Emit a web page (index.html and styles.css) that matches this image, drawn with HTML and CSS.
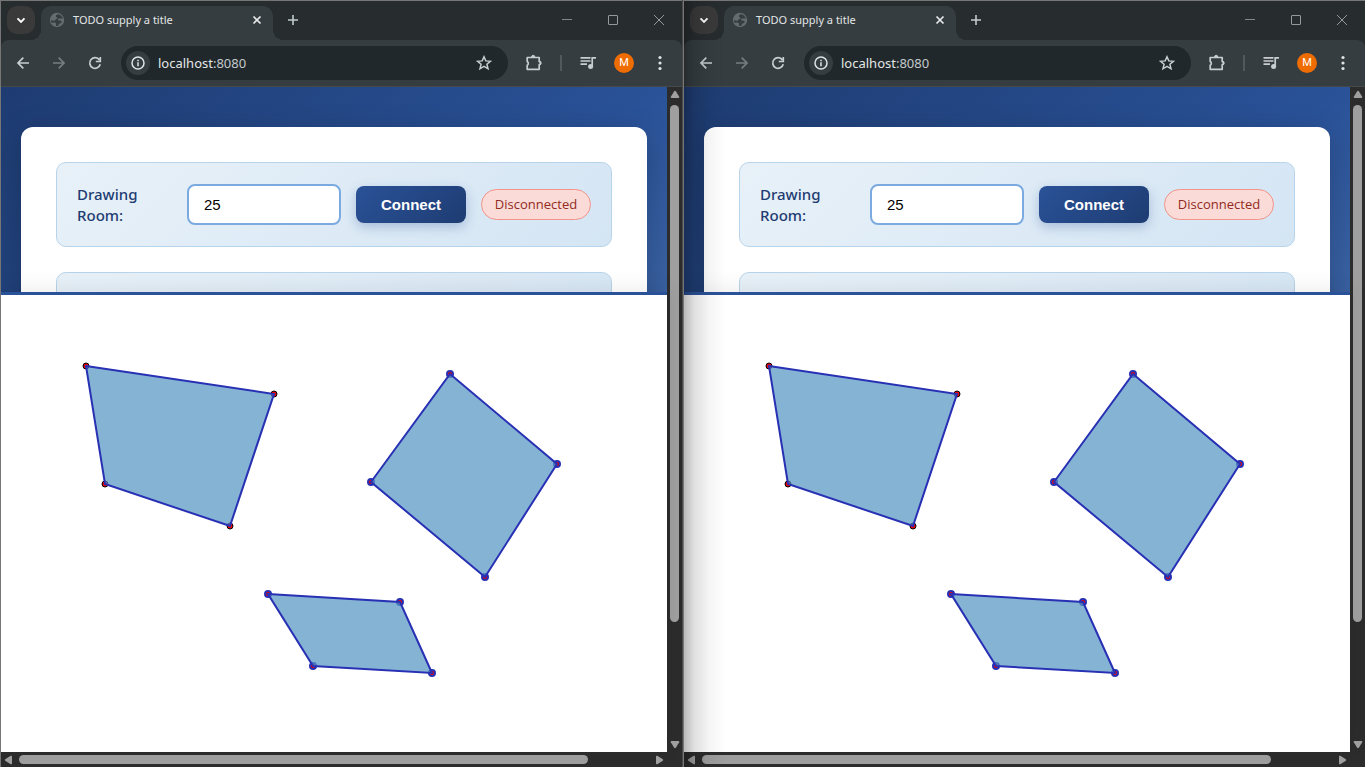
FILE: index.html
```html
<!DOCTYPE html>
<html lang="en">
<head>
<meta charset="utf-8">
<title>TODO supply a title</title>
<link rel="stylesheet" href="styles.css">
</head>
<body>
<svg class="defs" aria-hidden="true">
  <symbol id="i-chevron" viewBox="0 0 16 16"><path d="M4.500 6.300 8 9.800l3.500-3.500" fill="none" stroke="#fff" stroke-width="1.900"/></symbol>
  <symbol id="i-globe" viewBox="0 0 16 16"><circle cx="8" cy="8" r="7.200" fill="#666b6e"/><path d="M9.500 2.300C7.500 2.500 6.700 3.400 7 4.400s1.600.8 1.500 1.800c-.1.900-1.500.7-2.200 1.500-.5.600-.2 1.100-1.200 1L1.900 8.200c0 1 .2 1.900.6 2.600l2.600-.2c1.400 0 1.900.6 1.800 1.500l.3 1.900c1.600.1 2.400-.3 2.500-1.300.1-1 .8-1.200 1.700-1.400 1.100-.3 1.500-1.200 1.100-2-.4-.8-1.400-1-2.400-.8-1 .1-1.500-.5-1-1.200.5-.8 1.300-.8 2.300-.8h2.500c-.3-1-1-2.100-1.800-2.800-.9-.7-1.600-1.200-2.600-1.400z" fill="#353d40"/></symbol>
  <symbol id="i-x" viewBox="0 0 16 16"><path d="m4.500 4.500 7 7m0-7-7 7" stroke="#e8eaea" stroke-width="1.700"/></symbol>
  <symbol id="i-plus" viewBox="0 0 16 16"><path d="M8 3v10M3 8h10" stroke="#c4cbcd" stroke-width="1.600"/></symbol>
  <symbol id="i-min" viewBox="0 0 16 16"><path d="M3 7.500h10" stroke="#82878a"/></symbol>
  <symbol id="i-max" viewBox="0 0 16 16"><rect x="3.500" y="3.500" width="9" height="9" rx=".5" fill="none" stroke="#94999b"/></symbol>
  <symbol id="i-close" viewBox="0 0 16 16"><path d="m3 3 10 10m0-10L3 13" stroke="#94999b"/></symbol>
  <symbol id="i-back" viewBox="0 0 16 16"><path d="M14 8H3m5.300-5.300L3 8l5.300 5.300" fill="none" stroke="currentColor" stroke-width="1.700"/></symbol>
  <symbol id="i-fwd" viewBox="0 0 16 16"><path d="M2 8h11M7.700 2.700 13 8l-5.300 5.300" fill="none" stroke="currentColor" stroke-width="1.700"/></symbol>
  <symbol id="i-reload" viewBox="0 0 16 16"><path d="M12.400 5A5.300 5.300 0 1 0 13.200 9.200M13.300 2v4.500H8.800" fill="none" stroke="#c7cdd0" stroke-width="1.700"/></symbol>
  <symbol id="i-info" viewBox="0 0 16 16"><circle cx="8" cy="8" r="6" fill="none" stroke="#dfe3e4" stroke-width="1.500"/><path d="M8 7.300v3.900M8 4.700v1.500" stroke="#dfe3e4" stroke-width="1.500"/></symbol>
  <symbol id="i-star" viewBox="0 0 16 16"><path d="m8 1.800 1.800 4.100 4.600.4-3.500 3 1.100 4.500L8 11.400l-4 2.400 1.100-4.500-3.500-3 4.600-.4z" fill="none" stroke="#c7cdd0" stroke-width="1.500"/></symbol>
  <symbol id="i-ext" viewBox="0 0 18 18"><path d="M2.200 3.500h12v4.100a1.500 1.500 0 0 1 0 3v4.700h-12v-4a2.200 2.200 0 0 0 0-3.800z" fill="none" stroke="#c7cdd0" stroke-width="1.700" stroke-linejoin="round"/><path d="M6.500 3.300a1.700 2 0 0 1 3.400 0M14.800 7.400a2 2 0 0 1 0 3.600" fill="#c7cdd0" stroke="#c7cdd0"/></symbol>
  <symbol id="i-music" viewBox="0 0 18 18"><path d="M1.500 3.800h10M1.500 7h10M1.500 10.200h6.500M13.200 13V3.800H17" fill="none" stroke="#c7cdd0" stroke-width="1.700"/><circle cx="11.600" cy="12.500" r="2.500" fill="#c7cdd0"/></symbol>
  <symbol id="i-dots" viewBox="0 0 16 16"><g fill="#dfe3e4"><circle cx="8" cy="2.500" r="1.600"/><circle cx="8" cy="8" r="1.600"/><circle cx="8" cy="13.500" r="1.600"/></g></symbol>
  <symbol id="i-arrow" viewBox="0 0 16 16"><path d="M7 4.500q1-1.400 2 0l3.200 5.200q.5 1.300-1 1.300H4.800q-1.500 0-1-1.300z" fill="#9f9f9f"/></symbol>
  <symbol id="drawing" overflow="visible">
    <g fill="#f00000" stroke="#000">
      <circle cx="85" cy="71" r="3"/><circle cx="273" cy="99" r="3"/><circle cx="229" cy="231" r="3"/><circle cx="104" cy="189" r="3"/>
    </g>
    <g fill="#f00000" stroke="#2830b4" stroke-width="2">
      <circle cx="449" cy="79" r="3"/><circle cx="556" cy="169" r="3"/><circle cx="484" cy="282" r="3"/><circle cx="370" cy="187" r="3"/>
      <circle cx="267" cy="299" r="3"/><circle cx="399" cy="307" r="3"/><circle cx="431" cy="378" r="3"/><circle cx="312" cy="371" r="3"/>
    </g>
    <g fill="rgba(81,147,194,.7)" stroke="#2830b4" stroke-width="2">
      <path d="M85 71 273 99 229 231 104 189z"/>
      <path d="M449 79 556 169 484 282 370 187z"/>
      <path d="M267 299 399 307 431 378 312 371z"/>
    </g>
  </symbol>
</svg>
<div class="desktop">
  <section class="window">
    <header class="tabstrip">
      <button class="tab-search" aria-label="Search tabs"><svg class="icon"><use href="#i-chevron"/></svg></button>
      <div class="tab">
        <svg class="icon"><use href="#i-globe"/></svg>
        <span class="tab-title">TODO supply a title</span>
        <button class="icon-btn" aria-label="Close tab"><svg class="icon"><use href="#i-x"/></svg></button>
      </div>
      <button class="icon-btn new-tab" aria-label="New tab"><svg class="icon"><use href="#i-plus"/></svg></button>
      <div class="controls">
        <button class="icon-btn" aria-label="Minimize"><svg class="icon"><use href="#i-min"/></svg></button>
        <button class="icon-btn" aria-label="Maximize"><svg class="icon"><use href="#i-max"/></svg></button>
        <button class="icon-btn" aria-label="Close"><svg class="icon"><use href="#i-close"/></svg></button>
      </div>
    </header>
    <nav class="toolbar">
      <div class="nav-buttons">
        <button class="icon-btn" aria-label="Back"><svg class="icon"><use href="#i-back"/></svg></button>
        <button class="icon-btn dim" aria-label="Forward"><svg class="icon"><use href="#i-fwd"/></svg></button>
        <button class="icon-btn" aria-label="Reload"><svg class="icon"><use href="#i-reload"/></svg></button>
      </div>
      <div class="omnibox">
        <button class="site-info" aria-label="Site information"><svg class="icon"><use href="#i-info"/></svg></button>
        <div class="url">localhost<span class="port">:8080</span></div>
        <button class="icon-btn" aria-label="Bookmark"><svg class="icon"><use href="#i-star"/></svg></button>
      </div>
      <div class="actions">
        <button class="icon-btn" aria-label="Extensions"><svg class="icon-lg"><use href="#i-ext"/></svg></button>
        <span class="divider"></span>
        <button class="icon-btn" aria-label="Media"><svg class="icon-lg"><use href="#i-music"/></svg></button>
        <button class="avatar" aria-label="Profile">M</button>
      </div>
      <button class="icon-btn menu" aria-label="Menu"><svg class="icon"><use href="#i-dots"/></svg></button>
    </nav>
    <div class="viewport">
      <main class="page">
        <div class="backdrop">
          <div class="card">
            <form class="panel">
              <label class="room-label" for="room1">Drawing Room:</label>
              <input class="room-input" id="room1" type="text" value="25">
              <button class="connect" type="button">Connect</button>
              <span class="status">Disconnected</span>
            </form>
            <div class="panel tools"></div>
          </div>
        </div>
        <div class="canvas"><svg class="drawing"><use href="#drawing"/></svg></div>
      </main>
      <div class="scroll vertical">
        <button class="icon-btn" aria-label="Scroll up"><svg class="icon"><use href="#i-arrow"/></svg></button>
        <div class="track"><div class="thumb"></div></div>
        <button class="icon-btn down" aria-label="Scroll down"><svg class="icon"><use href="#i-arrow"/></svg></button>
      </div>
    </div>
    <div class="scroll horizontal">
      <button class="icon-btn left" aria-label="Scroll left"><svg class="icon"><use href="#i-arrow"/></svg></button>
      <div class="track"><div class="thumb"></div></div>
      <button class="icon-btn right" aria-label="Scroll right"><svg class="icon"><use href="#i-arrow"/></svg></button>
    </div>
  </section>
  <section class="window shaded">
    <header class="tabstrip">
      <button class="tab-search" aria-label="Search tabs"><svg class="icon"><use href="#i-chevron"/></svg></button>
      <div class="tab">
        <svg class="icon"><use href="#i-globe"/></svg>
        <span class="tab-title">TODO supply a title</span>
        <button class="icon-btn" aria-label="Close tab"><svg class="icon"><use href="#i-x"/></svg></button>
      </div>
      <button class="icon-btn new-tab" aria-label="New tab"><svg class="icon"><use href="#i-plus"/></svg></button>
      <div class="controls">
        <button class="icon-btn" aria-label="Minimize"><svg class="icon"><use href="#i-min"/></svg></button>
        <button class="icon-btn" aria-label="Maximize"><svg class="icon"><use href="#i-max"/></svg></button>
        <button class="icon-btn" aria-label="Close"><svg class="icon"><use href="#i-close"/></svg></button>
      </div>
    </header>
    <nav class="toolbar">
      <div class="nav-buttons">
        <button class="icon-btn" aria-label="Back"><svg class="icon"><use href="#i-back"/></svg></button>
        <button class="icon-btn dim" aria-label="Forward"><svg class="icon"><use href="#i-fwd"/></svg></button>
        <button class="icon-btn" aria-label="Reload"><svg class="icon"><use href="#i-reload"/></svg></button>
      </div>
      <div class="omnibox">
        <button class="site-info" aria-label="Site information"><svg class="icon"><use href="#i-info"/></svg></button>
        <div class="url">localhost<span class="port">:8080</span></div>
        <button class="icon-btn" aria-label="Bookmark"><svg class="icon"><use href="#i-star"/></svg></button>
      </div>
      <div class="actions">
        <button class="icon-btn" aria-label="Extensions"><svg class="icon-lg"><use href="#i-ext"/></svg></button>
        <span class="divider"></span>
        <button class="icon-btn" aria-label="Media"><svg class="icon-lg"><use href="#i-music"/></svg></button>
        <button class="avatar" aria-label="Profile">M</button>
      </div>
      <button class="icon-btn menu" aria-label="Menu"><svg class="icon"><use href="#i-dots"/></svg></button>
    </nav>
    <div class="viewport">
      <main class="page">
        <div class="backdrop">
          <div class="card">
            <form class="panel">
              <label class="room-label" for="room2">Drawing Room:</label>
              <input class="room-input" id="room2" type="text" value="25">
              <button class="connect" type="button">Connect</button>
              <span class="status">Disconnected</span>
            </form>
            <div class="panel tools"></div>
          </div>
        </div>
        <div class="canvas"><svg class="drawing"><use href="#drawing"/></svg></div>
      </main>
      <div class="scroll vertical">
        <button class="icon-btn" aria-label="Scroll up"><svg class="icon"><use href="#i-arrow"/></svg></button>
        <div class="track"><div class="thumb"></div></div>
        <button class="icon-btn down" aria-label="Scroll down"><svg class="icon"><use href="#i-arrow"/></svg></button>
      </div>
    </div>
    <div class="scroll horizontal">
      <button class="icon-btn left" aria-label="Scroll left"><svg class="icon"><use href="#i-arrow"/></svg></button>
      <div class="track"><div class="thumb"></div></div>
      <button class="icon-btn right" aria-label="Scroll right"><svg class="icon"><use href="#i-arrow"/></svg></button>
    </div>
  </section>
</div>
</body>
</html>
```
FILE: styles.css
```css
* { box-sizing: border-box; }
body { margin: 0; background: #4a4a4a; font-family: "Segoe UI", "Noto Sans", sans-serif; }
button { margin: 0; padding: 0; border: 0; background: none; color: inherit; font: inherit; }
.defs { position: absolute; width: 0; height: 0; }

.desktop { display: grid; grid-template-columns: 1fr 1fr; gap: 1px; height: 100vh; }
.window { position: relative; display: flex; flex-direction: column; min-width: 0; overflow: hidden; background: #272c2f; border-left: 1px solid #767676; border-top: 1px solid #767676; }
.shaded::after { content: ""; position: absolute; inset: 0 auto 0 0; width: 42px; pointer-events: none; background: linear-gradient(90deg, rgba(0,0,0,.27), rgba(0,0,0,.12) 25%, rgba(0,0,0,.04) 60%, transparent); }

.icon { display: block; flex: none; width: 16px; height: 16px; }
.icon-lg { display: block; flex: none; width: 18px; height: 18px; }
.icon-btn { display: flex; flex: none; align-items: center; justify-content: center; color: #c7cdd0; }
.dim { color: #767d80; }

.tabstrip { display: flex; flex: none; align-items: center; height: 39px; padding: 0 0 1px 6px; }
.tab-search { display: flex; align-items: center; justify-content: center; width: 28px; height: 28px; border-radius: 10px; background: #3b3a3a; }
.tab { position: relative; display: flex; align-items: center; gap: 8px; align-self: flex-end; width: 232px; height: 34px; margin: 0 0 -1px 6px; padding: 0 8px 6px; border-radius: 10px 10px 0 0; background: #353d40; }
.tab::before, .tab::after { content: ""; position: absolute; bottom: 0; width: 10px; height: 10px; }
.tab::before { right: 100%; background: radial-gradient(circle at 0 0, transparent 10px, #353d40 10px); }
.tab::after { left: 100%; background: radial-gradient(circle at 100% 0, transparent 10px, #353d40 10px); }
.tab-title { flex: 1; color: #e3e6e7; font-size: 11px; line-height: 16px; white-space: nowrap; }
.new-tab { margin-left: 12px; }
.controls { display: flex; gap: 30px; margin-left: auto; padding-right: 15px; }

.toolbar { display: flex; flex: none; align-items: center; height: 47px; padding: 0 14px; border-bottom: 1px solid #46494a; border-radius: 8px 8px 0 0; background: #353d40; }
.nav-buttons { display: flex; gap: 20px; }
.omnibox { display: flex; flex: 1; align-items: center; height: 34px; margin: 0 17px 0 18px; padding: 0 16px 0 5px; border-radius: 17px; background: #20282b; }
.site-info { display: flex; align-items: center; justify-content: center; width: 24px; height: 24px; border-radius: 12px; background: #353d40; }
.url { flex: 1; padding-left: 8px; color: #e3e6e7; font-size: 13px; line-height: 20px; }
.port { color: #c4c9cb; }
.actions { display: flex; align-items: center; gap: 17px; }
.divider { width: 2px; height: 16px; background: #52595c; }
.avatar { width: 20px; height: 20px; border-radius: 10px; background: #ef6c00; color: #fff; font-family: Roboto, sans-serif; font-size: 11px; line-height: 20px; text-align: center; }
.menu { margin-left: 18px; }

.viewport { display: flex; flex: 1; min-height: 0; }
.page { display: flex; flex: 1; flex-direction: column; min-width: 0; }
.backdrop { flex: none; height: 205px; padding: 40px 20px 0; overflow: hidden; background: linear-gradient(135deg, #1e3c72 0%, #2a5298 50%, #5f88bd 100%) 0 0 / 100% 666px; }
.card { height: 400px; padding: 35px; border-radius: 12px; background: #fff; box-shadow: 0 8px 32px rgba(0,0,0,.2); }
.panel { display: flex; align-items: center; gap: 15px; min-height: 84px; margin: 0 0 25px; padding: 20px; border: 1px solid #b8d4ea; border-radius: 10px; background: linear-gradient(135deg, #e8f1f8, #d4e5f4); }
.tools { min-height: 160px; }
.room-label { flex: none; width: 95px; padding-top: 1px; color: #1e3c72; font-size: 15px; font-weight: 500; line-height: 21px; }
.room-input { flex: 1; min-width: 0; height: 41px; padding: 0 15px; border: 2px solid #7baae0; border-radius: 8px; outline: 0; background: #fff; color: #000; font-family: "Liberation Sans", Arial, sans-serif; font-size: 15px; }
.connect { width: 110px; height: 37px; border-radius: 8px; background: linear-gradient(135deg, #2a5298, #1e3c72); box-shadow: 0 4px 12px rgba(42,82,152,.3); color: #fff; font-family: "Liberation Sans", Arial, sans-serif; font-size: 15px; font-weight: 700; }
.status { width: 110px; border: 1px solid #f1948a; border-radius: 16px; background: #fadbd8; color: #922b21; font-family: "Open Sans", sans-serif; font-size: 13px; font-weight: 500; line-height: 29px; text-align: center; }
.canvas { position: relative; flex: 1; min-height: 0; border-top: 3px solid #2a5298; background: #fff; box-shadow: 0 -4px 20px rgba(0,0,0,.07); }
.drawing { display: block; width: 100%; height: 100%; }

.scroll { display: flex; flex: none; align-items: center; background: #2c2c2c; }
.scroll .icon-btn { width: 16px; height: 16px; }
.track { display: flex; flex: 1; }
.thumb { border-radius: 5px; background: #9f9f9f; }
.vertical { flex-direction: column; width: 15px; }
.vertical .track { justify-content: center; width: 15px; padding-top: 2px; }
.vertical .thumb { width: 9px; height: 82%; }
.horizontal { height: 15px; padding-right: 15px; }
.horizontal .track { padding-left: 2px; }
.horizontal .thumb { width: 90%; height: 9px; }
.down .icon { transform: rotate(180deg); }
.left .icon { transform: rotate(-90deg); }
.right .icon { transform: rotate(90deg); }
```
